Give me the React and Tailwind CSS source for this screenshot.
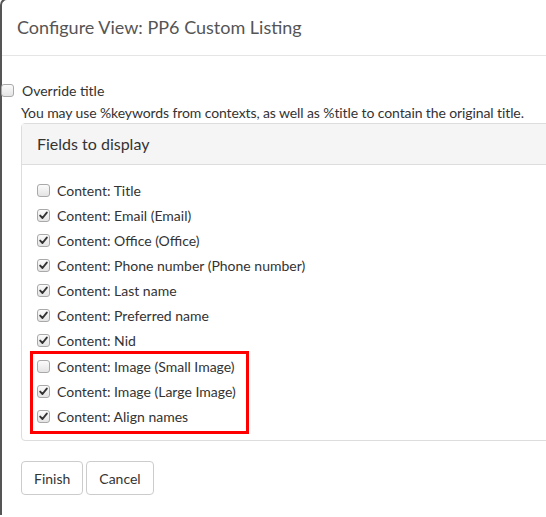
import React from "react";

const fields = [
  { label: "Content: Title", checked: false },
  { label: "Content: Email (Email)", checked: true },
  { label: "Content: Office (Office)", checked: true },
  { label: "Content: Phone number (Phone number)", checked: true },
  { label: "Content: Last name", checked: true },
  { label: "Content: Preferred name", checked: true },
  { label: "Content: Nid", checked: true },
  { label: "Content: Image (Small Image)", checked: false, marked: true },
  { label: "Content: Image (Large Image)", checked: true, marked: true },
  { label: "Content: Align names", checked: true, marked: true },
];

const Checkbox = ({ checked }) => (
  <span className="flex w-[13px] h-[13px] shrink-0 items-center justify-center rounded-[3px] border border-[#a9a9a9] bg-[linear-gradient(#fbfbfb,#e4e4e4)]">
    {checked && (
      <svg width="9" height="9" viewBox="0 0 9 9">
        <path d="M1.2 4.6 L3.5 7 L7.8 1.6" fill="none" stroke="#333" strokeWidth="1.9" strokeLinecap="round" strokeLinejoin="round" />
      </svg>
    )}
  </span>
);

const FieldRow = ({ field }) => (
  <label className="flex h-[25px] items-center gap-[7px] pl-[15px]">
    <Checkbox checked={field.checked} />
    <span>{field.label}</span>
  </label>
);

export default function App() {
  const plain = fields.filter((field) => !field.marked);
  const marked = fields.filter((field) => field.marked);

  return (
    <div className="w-[546px] h-[517px] overflow-hidden bg-white text-[14px] text-[#333] font-['Lato','Open_Sans',sans-serif]">
      <div className="w-[640px] h-full border-l-2 border-t-2 border-[#555] rounded-tl-[7px] -mt-[2px] bg-white">
        <div className="flex h-[56px] items-center px-[15px] border-b border-[#e5e5e5]">
          <h1 className="text-[18px] text-[#555]">Configure View: PP6 Custom Listing</h1>
        </div>

        <div className="pt-[24px]">
          <label className="flex h-[20px] items-center gap-[8px] -ml-[1px]">
            <Checkbox checked={false} />
            <span>Override title</span>
          </label>
          <p className="pl-[19px] h-[23px] pt-[3px] leading-[20px] tracking-[-0.1px]">
            You may use %keywords from contexts, as well as %title to contain the original title.
          </p>

          <section className="ml-[19px] border border-[#ddd] rounded-[4px]">
            <header className="flex h-[41px] items-center px-[15px] bg-[#f5f5f5] border-b border-[#ddd] text-[16px]">
              Fields to display
            </header>
            <div className="pt-[13px] pb-[6px]">
              {plain.map((field) => (
                <FieldRow field={field} key={field.label} />
              ))}
              <div className="w-[219px] ml-[8px] -mt-[2px] border-[3px] border-[#f00]">
                <div className="-ml-[11px] pb-[2px]">
                  {marked.map((field) => (
                    <FieldRow field={field} key={field.label} />
                  ))}
                </div>
              </div>
            </div>
          </section>

          <div className="flex gap-[3px] ml-[19px] mt-[20px]">
            <button type="button" className="h-[34px] px-[12px] border border-[#ccc] rounded-[4px] bg-white">
              Finish
            </button>
            <button type="button" className="h-[34px] px-[12px] border border-[#ccc] rounded-[4px] bg-white">
              Cancel
            </button>
          </div>
        </div>
      </div>
    </div>
  );
}
